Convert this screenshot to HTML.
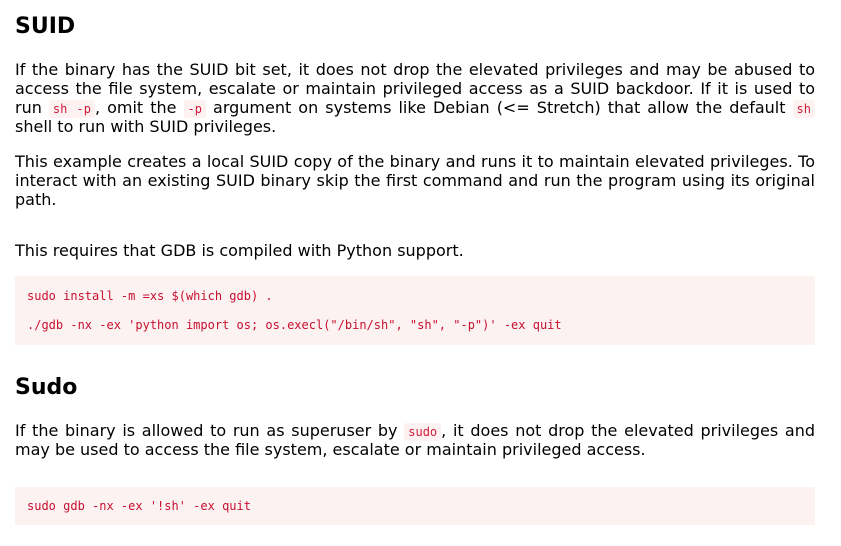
<!DOCTYPE html>
<html><head><style>
body{margin:0;background:#fff;width:841px;height:546px;overflow:hidden;font-family:"DejaVu Sans",sans-serif;color:#000}
.a{position:absolute;left:15px;width:800px}
h2{margin:0;font-size:22px;font-weight:bold;line-height:26px}
p{margin:0;font-size:16px;line-height:19px;text-align:justify}
code{font-family:"DejaVu Sans Mono",monospace;font-size:12px;line-height:0;color:#d01c3a;background:#fdf1f1;padding:2px 4px;border-radius:3px}
.pre{background:#fdf2f2;font-family:"DejaVu Sans Mono",monospace;font-size:12px;color:#c8102e;box-sizing:border-box;padding:0 12px}
.pre div{position:absolute;left:12px}
</style></head><body>
<h2 class="a" style="top:14px">SUID</h2>
<p class="a" style="top:60px">If the binary has the SUID bit set, it does not drop the elevated privileges and may be abused to access the file system, escalate or maintain privileged access as a SUID backdoor. If it is used to run <code>sh -p</code>, omit the <code>-p</code> argument on systems like Debian (&lt;= Stretch) that allow the default <code>sh</code> shell to run with SUID privileges.</p>
<p class="a" style="top:152px">This example creates a local SUID copy of the binary and runs it to maintain elevated privileges. To interact with an existing SUID binary skip the first command and run the program using its original path.</p>
<p class="a" style="top:241px">This requires that GDB is compiled with Python support.</p>
<div class="a pre" style="top:276px;height:69px"><div style="top:13px">sudo install -m =xs $(which gdb) .</div><div style="top:42px">./gdb -nx -ex 'python import os; os.execl("/bin/sh", "sh", "-p")' -ex quit</div></div>
<h2 class="a" style="top:375px">Sudo</h2>
<p class="a" style="top:421px">If the binary is allowed to run as superuser by <code>sudo</code>, it does not drop the elevated privileges and may be used to access the file system, escalate or maintain privileged access.</p>
<div class="a pre" style="top:487px;height:38px"><div style="top:12px">sudo gdb -nx -ex '!sh' -ex quit</div></div>
</body></html>
